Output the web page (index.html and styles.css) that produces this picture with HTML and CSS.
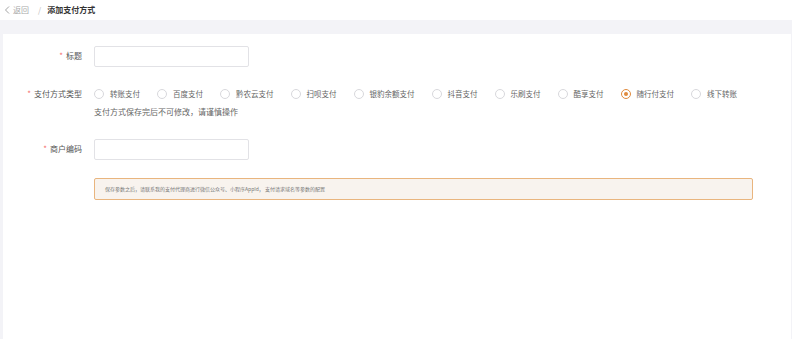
FILE: index.html
```html
<!DOCTYPE html>
<html lang="zh">
<head>
    <meta charset="UTF-8">
    <meta name="viewport" content="width=device-width, initial-scale=1.0">
    <title>添加支付方式</title>
    <link rel="stylesheet" href="styles.css">
</head>
<body>
    <div class="header">
        <span class="back">
            <svg width="6" height="8" viewBox="0 0 6 8"><path d="M5 0.5 L1.5 4 L5 7.5" fill="none" stroke="#999" stroke-width="0.9"/></svg>
            返回
        </span>
        <span class="sep">/</span>
        <span class="current">添加支付方式</span>
    </div>

    <div class="card">
        <div class="form-item">
            <label class="label"><i>*</i>标题</label>
            <input type="text" class="input">
        </div>

        <div class="form-item radio-item">
            <label class="label"><i>*</i>支付方式类型</label>
            <div class="field">
                <div class="radio-group">
                    <span class="radio"><b></b>转账支付</span>
                    <span class="radio"><b></b>百度支付</span>
                    <span class="radio"><b></b>黔农云支付</span>
                    <span class="radio"><b></b>扫呗支付</span>
                    <span class="radio"><b></b>银豹余额支付</span>
                    <span class="radio"><b></b>抖音支付</span>
                    <span class="radio"><b></b>乐刷支付</span>
                    <span class="radio"><b></b>酷享支付</span>
                    <span class="radio checked"><b></b>随行付支付</span>
                    <span class="radio"><b></b>线下转账</span>
                </div>
                <div class="help">支付方式保存完后不可修改，请谨慎操作</div>
            </div>
        </div>

        <div class="form-item">
            <label class="label"><i>*</i>商户编码</label>
            <input type="text" class="input">
        </div>

        <div class="alert">保存参数之后，请联系我的支付代理商进行微信公众号、小程序AppId， 支付请求域名等参数的配置</div>
    </div>
</body>
</html>
```

FILE: styles.css
```css
body {
    margin: 0;
    background: #f3f3f7;
    font-family: "Noto Sans CJK SC", "Noto Sans", sans-serif;
    font-size: 8px;
    color: #555;
    height: 339px;
    overflow: hidden;
}
.header {
    background: #fff;
    height: 20px;
    line-height: 18px;
    padding-left: 4px;
    display: flex;
    align-items: center;
}
.back {
    color: #aaa;
    display: flex;
    align-items: center;
}
.back svg {
    margin-right: 3px;
}
.sep {
    color: #bbb;
    margin: 0 6px 0 9px;
}
.current {
    color: #333;
    font-weight: bold;
}
.card {
    background: #fff;
    margin: 14px 1px 0 3px;
    padding-top: 12px;
    height: 305px;
    box-sizing: border-box;
}
.form-item {
    display: flex;
    align-items: flex-start;
    margin-bottom: 21px;
}
.label {
    width: 91px;
    padding-right: 12px;
    box-sizing: border-box;
    flex: none;
    text-align: right;
    line-height: 20px;
    color: #555;
}
.label i {
    font-style: normal;
    color: #f56c6c;
    margin-right: 3px;
}
.input {
    width: 155px;
    height: 21px;
    box-sizing: border-box;
    border: 1px solid #e2e2e6;
    border-radius: 2px;
    margin: 0;
    padding: 0 6px;
}
.radio-item .label {
    line-height: 12px;
}
.radio-group {
    display: flex;
    line-height: 12px;
}
.radio {
    display: flex;
    align-items: center;
    margin-right: 17px;
    font-size: 7.5px;
    color: #666;
}
.radio b {
    width: 10px;
    height: 10px;
    box-sizing: border-box;
    border: 1px solid #d8d8dc;
    border-radius: 50%;
    margin-right: 6px;
    display: flex;
    align-items: center;
    justify-content: center;
}
.radio.checked b {
    border-color: #e08a3c;
}
.radio.checked b::after {
    content: "";
    width: 4px;
    height: 4px;
    border-radius: 50%;
    background: #e08a3c;
}
.help {
    margin-top: 6px;
    line-height: 12px;
    color: #666;
}
.alert {
    margin: -3px 38px 0 91px;
    height: 22px;
    box-sizing: border-box;
    border: 1px solid #e9b57e;
    border-radius: 2px;
    background: #f8f3ee;
    padding-left: 10px;
    line-height: 20px;
    font-size: 5px;
    color: #777;
}
```
